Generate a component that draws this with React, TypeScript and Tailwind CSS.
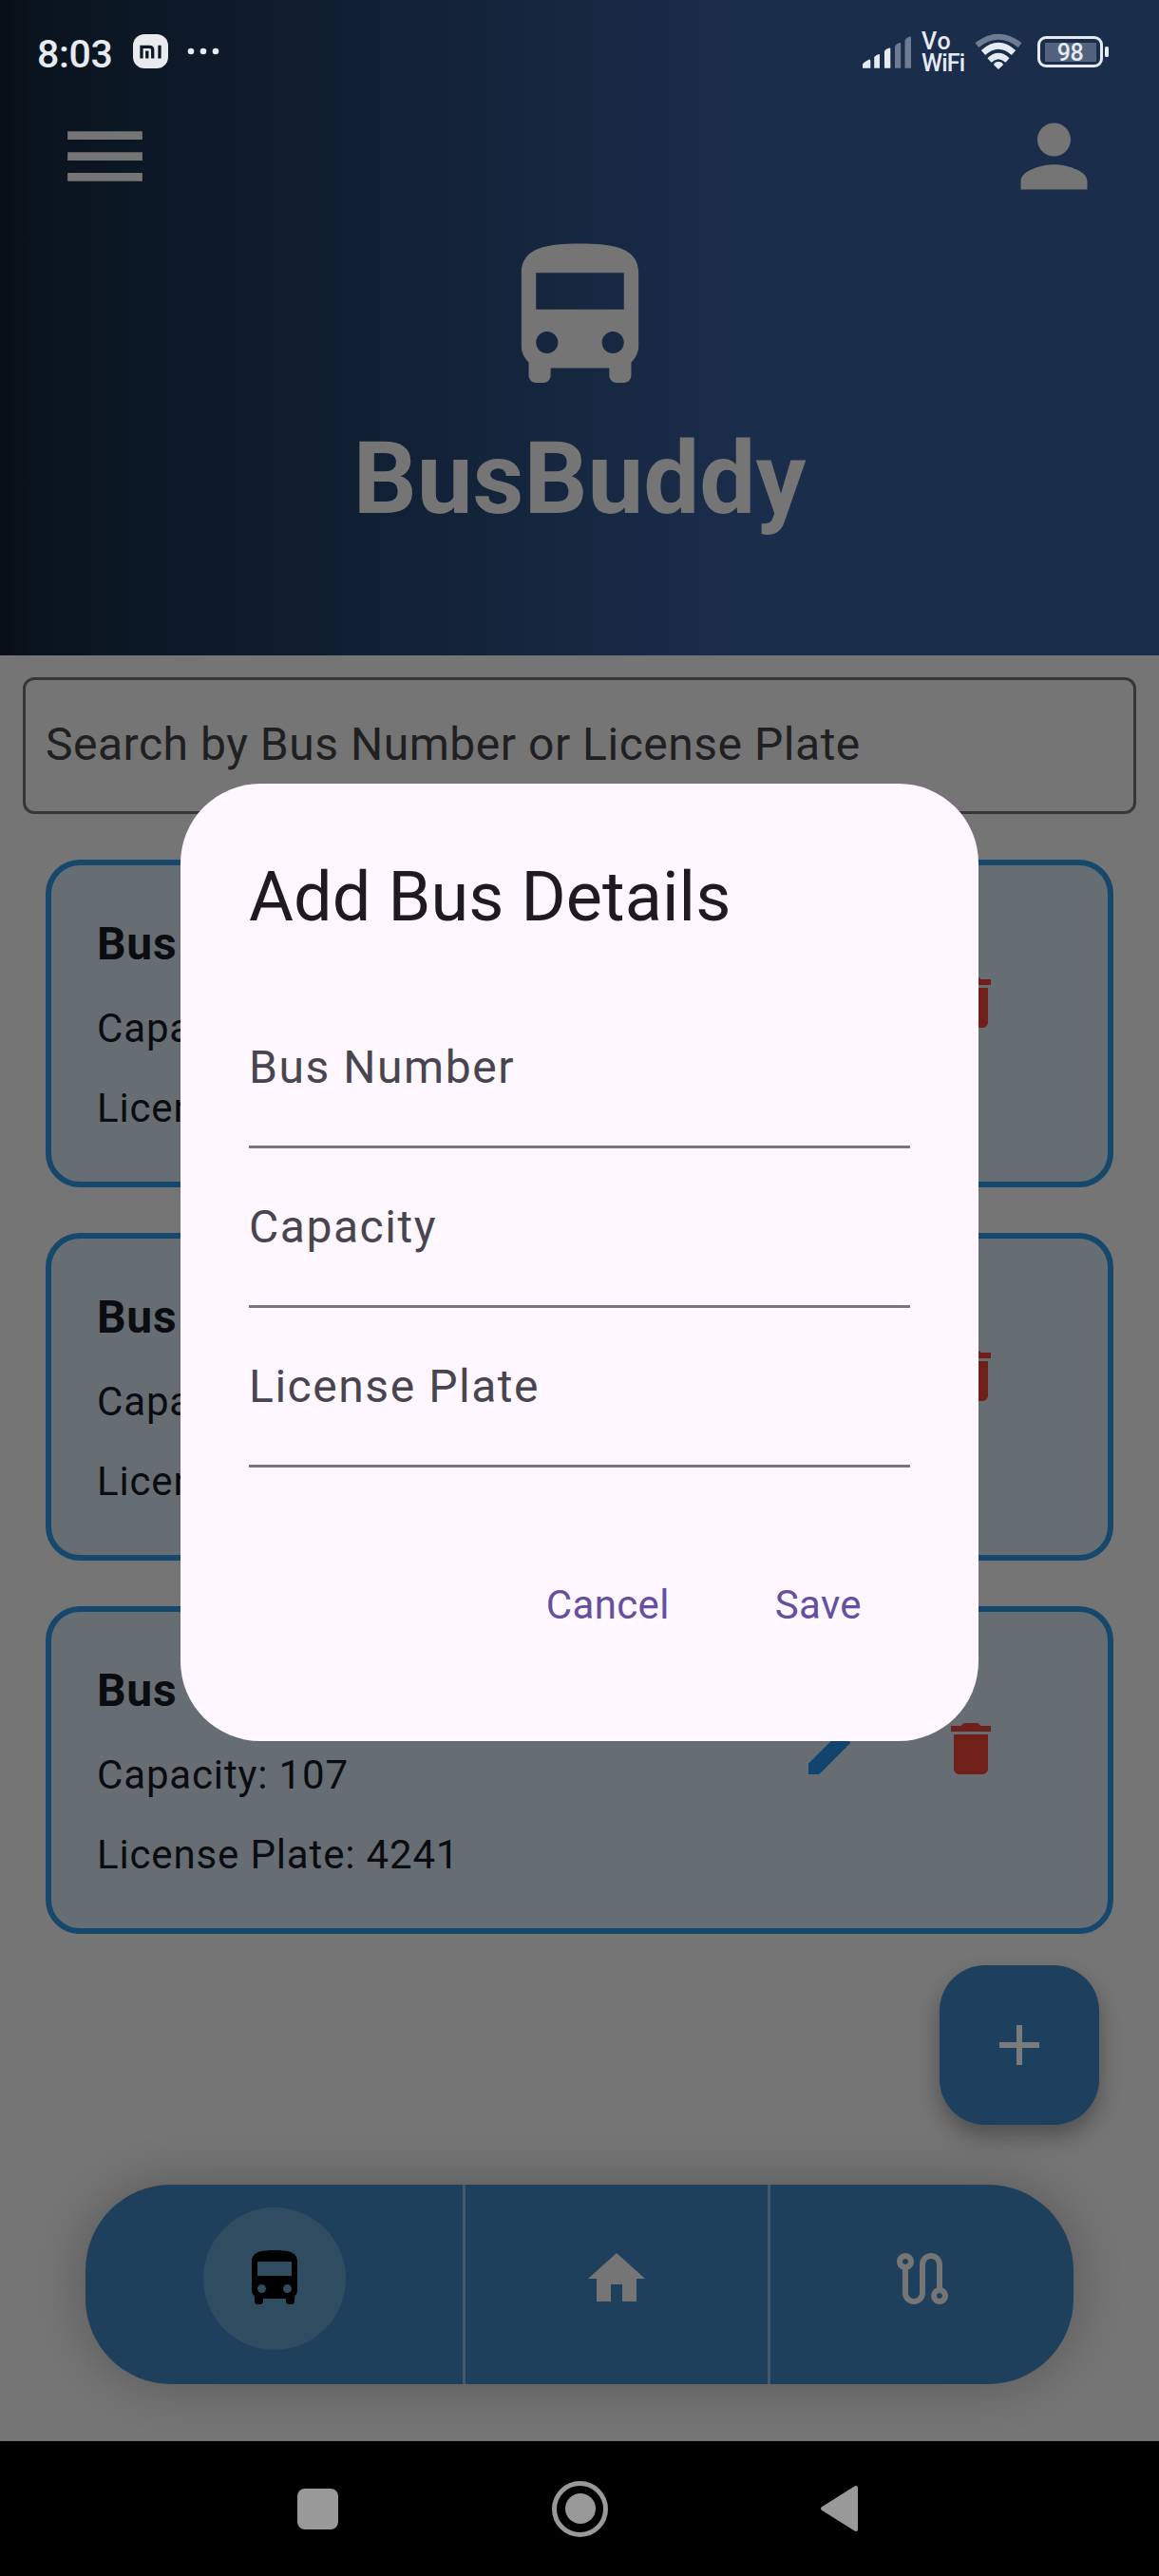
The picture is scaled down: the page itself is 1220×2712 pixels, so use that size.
import React from "react";

const MENU = "M3 18h18v-2H3v2zm0-5h18v-2H3v2zm0-7v2h18V6H3z";
const PERSON =
  "M12 12c2.21 0 4-1.79 4-4s-1.79-4-4-4-4 1.79-4 4 1.79 4 4 4zm0 2c-2.67 0-8 1.34-8 4v2h16v-2c0-2.66-5.33-4-8-4z";
const BUS =
  "M4 16c0 .88.39 1.67 1 2.22V20c0 .55.45 1 1 1h1c.55 0 1-.45 1-1v-1h8v1c0 .55.45 1 1 1h1c.55 0 1-.45 1-1v-1.78c.61-.55 1-1.34 1-2.22V6c0-3.5-3.58-4-8-4s-8 .5-8 4v10zm3.5 1c-.83 0-1.5-.67-1.5-1.5S6.67 14 7.5 14s1.5.67 1.5 1.5S8.33 17 7.5 17zm9 0c-.83 0-1.5-.67-1.5-1.5s.67-1.5 1.5-1.5 1.5.67 1.5 1.5-.67 1.5-1.5 1.5zm1.5-6H6V6h12v5z";
const EDIT =
  "M3 17.25V21h3.75L17.81 9.94l-3.75-3.75L3 17.25zM20.71 7.04c.39-.39.39-1.02 0-1.41l-2.34-2.34c-.39-.39-1.02-.39-1.41 0l-1.83 1.83 3.75 3.75 1.83-1.83z";
const TRASH = "M6 19c0 1.1.9 2 2 2h8c1.1 0 2-.9 2-2V7H6v12zM19 4h-3.5l-1-1h-5l-1 1H5v2h14V4z";
const PLUS = "M19 13h-6v6h-2v-6H5v-2h6V5h2v6h6v2z";
const HOME = "M10 20v-6h4v6h5v-8h3L12 3 2 12h3v8z";
const ROUTE =
  "M19 15.18V7c0-2.21-1.79-4-4-4s-4 1.79-4 4v10c0 1.1-.9 2-2 2s-2-.9-2-2V8.82C8.16 8.4 9 7.3 9 6c0-1.66-1.34-3-3-3S3 4.34 3 6c0 1.3.84 2.4 2 2.82V17c0 2.21 1.79 4 4 4s4-1.79 4-4V7c0-1.1.9-2 2-2s2 .9 2 2v8.18A2.996 2.996 0 0 0 18 21c1.66 0 3-1.34 3-3 0-1.3-.84-2.4-2-2.82zM6 7c-.55 0-1-.45-1-1s.45-1 1-1 1 .45 1 1-.45 1-1 1zm12 12c-.55 0-1-.45-1-1s.45-1 1-1 1 .45 1 1-.45 1-1 1z";

function Icon({ d, className }: { d: string; className: string }) {
  return (
    <svg viewBox="0 0 24 24" fill="currentColor" className={className}>
      <path d={d} />
    </svg>
  );
}

function StatusBar() {
  return (
    <div className="flex h-[112px] items-start justify-between pl-[39px] pr-[53px] text-[#e6eaf2]">
      <div className="flex pt-[33px]">
        <span className="w-[79px] text-[41px] leading-[48px] tracking-[-0.3px] font-medium">8:03</span>
        <svg width="37" height="36" viewBox="0 0 37 36" className="ml-[22px] mt-[3px]">
          <rect width="37" height="36" rx="12" fill="#e8eaee" />
          <path d="M9 25.500V13.300H17.500Q20.700 13.300 20.700 16.500V25.500M14.800 17.500V25.500M28 11.800V25.500" fill="none" stroke="#0d1826" strokeWidth="3.300" />
        </svg>
        <svg width="36" height="10" viewBox="0 0 36 10" className="ml-[19px] mt-[16px]" fill="currentColor">
          <circle cx="5" cy="5" r="3.300" />
          <circle cx="18" cy="5" r="3.300" />
          <circle cx="31" cy="5" r="3.300" />
        </svg>
      </div>
      <div className="flex pt-[32px]">
        <svg width="52" height="42" viewBox="0 0 52 42" fill="currentColor">
          <path d="M0 39.700V36Q0 34 7 30.500Q8.300 30.500 8.300 32V39.700ZM12.200 39.700V28Q15 25 18 25V39.700ZM23 39.700V22Q25 18.500 29.300 18.500V39.700Z" />
          <path d="M34 39.700V17Q36 13 40.200 13V39.700ZM44.500 39.700V11Q46.500 6.500 51 6.500V39.700Z" fill="#6f7b92" />
        </svg>
        <div className="ml-[10px] w-[48px] text-[25px] leading-[23px] font-medium">
          <div className="tracking-[1px]">Vo</div>
          <div className="tracking-[-0.8px]">WiFi</div>
        </div>
        <svg width="50" height="42" viewBox="0 0 50 42" className="ml-[8px]" fill="none" strokeWidth="6">
          <path d="M2.300 15.500Q25 -2 47.700 15.500" stroke="#6f7b92" />
          <path d="M9 23.500Q25 9 41 23.500" stroke="currentColor" strokeWidth="6.500" />
          <path d="M15.500 31.500Q25 22.500 34.500 31.500" stroke="currentColor" />
          <path d="M25 41L20.200 36.500Q20 33 25 33Q30 33 29.800 36.500Z" fill="currentColor" stroke="none" />
        </svg>
        <div className="ml-[16px] mt-[6px] flex h-[33px] w-[69px] items-center justify-center rounded-[9px] border-[3px] border-[#e6eaf2]">
          <div className="flex h-[20px] w-[54px] items-center justify-center bg-[#54637d] text-[25px] leading-[20px] tracking-[-0.5px] font-medium">
            <span className="pt-[3px]">98</span>
          </div>
        </div>
        <div className="ml-[2px] mt-[17px] h-[11px] w-[4px] rounded-[1.500px] bg-[#e6eaf2]" />
      </div>
    </div>
  );
}

function Header() {
  return (
    <header className="h-[690px] bg-[linear-gradient(90deg,#090e18_0%,#0a141f_3%,#1a2d4b_65%,#1a2d4b_100%)] text-[#757575]">
      <StatusBar />
      <div className="flex justify-between px-[58px]">
        <Icon d={MENU} className="size-[105px]" />
        <Icon d={PERSON} className="size-[105px]" />
      </div>
      <div className="mt-[24px] flex flex-col items-center">
        <Icon d={BUS} className="size-[185px]" />
        <h1 className="mt-[17px] text-[105px] leading-[123px] font-bold">BusBuddy</h1>
      </div>
    </header>
  );
}

function BusCard() {
  return (
    <div className="flex h-[345px] items-start justify-between rounded-[36px] border-[6px] border-[#16476d] bg-[#666e73] pl-12 pr-[72px] text-[#0a0c0f]">
      <div className="pt-[47px]">
        <div className="text-[48px] leading-[72px] tracking-[0.700px] font-bold">Bus 12</div>
        <div className="mt-[23px] text-[42px] leading-[60px] tracking-[0.850px]">Capacity: 107</div>
        <div className="mt-[24px] text-[42px] leading-[60px] tracking-[0.850px]">License Plate: 4241</div>
      </div>
      <div className="flex pt-[72px]">
        <button className="flex size-[144px] items-center justify-center">
          <Icon d={EDIT} className="size-[72px] text-[#11456f]" />
        </button>
        <button className="flex size-[144px] items-center justify-center">
          <Icon d={TRASH} className="size-[72px] text-[#701f19]" />
        </button>
      </div>
    </div>
  );
}

function BottomBar() {
  return (
    <nav className="mx-[90px] mt-[63px] flex h-[210px] rounded-[90px] bg-[#1e405d] text-[#757575] shadow-[0_0_50px_2px_rgba(0,0,0,0.240)]">
      <div className="flex w-[397px] items-center justify-center pb-3">
        <div className="flex size-[150px] items-center justify-center rounded-full bg-[#304c61] text-black">
          <Icon d={BUS} className="size-[72px]" />
        </div>
      </div>
      <div className="w-[3px] bg-[#44596b]" />
      <div className="flex w-[318px] items-center justify-center pb-3">
        <Icon d={HOME} className="size-[72px]" />
      </div>
      <div className="w-[3px] bg-[#44596b]" />
      <div className="flex flex-1 items-center justify-center pb-3">
        <Icon d={ROUTE} className="size-[72px]" />
      </div>
    </nav>
  );
}

function SystemNav() {
  return (
    <div className="flex h-[142px] items-center justify-between bg-black pl-[313px] pr-[315px]">
      <div className="size-[43px] rounded-[8px] bg-[#999]" />
      <div className="ml-[2px] flex size-[59px] items-center justify-center rounded-full border-[5px] border-[#999]">
        <div className="size-[32px] rounded-full bg-[#999]" />
      </div>
      <svg width="42" height="50" viewBox="0 0 42 50">
        <path d="M3 25L38 3V47Z" fill="#999" stroke="#999" strokeWidth="4" strokeLinejoin="round" />
      </svg>
    </div>
  );
}

function Dialog() {
  return (
    <div className="absolute left-[190px] top-[825px] h-[1008px] w-[840px] rounded-[84px] bg-[#fef7ff] px-[72px] pt-[72px]">
      <h2 className="text-[72px] leading-[96px] tracking-[0.100px] text-[#1d1b20]">Add Bus Details</h2>
      <div className="mt-[48px]">
        {["Bus Number", "Capacity", "License Plate"].map((label) => (
          <div
            key={label}
            className="flex h-[168px] items-center border-b-[3px] border-[#7b757f] text-[48px] leading-[72px] tracking-[1.550px] text-[#49454f]"
          >
            {label}
          </div>
        ))}
      </div>
      <div className="mt-[73px] flex h-[144px] items-center justify-end gap-[24px] text-[42px] leading-[60px] font-[450] tracking-[0.350px] text-[#6550a0]">
        <button className="px-[36px]">Cancel</button>
        <button className="px-[51px]">Save</button>
      </div>
    </div>
  );
}

export default function App() {
  return (
    <div className="relative h-[2712px] w-[1220px] overflow-hidden bg-[#757575] font-[Roboto,sans-serif]">
      <Header />
      <div className="mx-[24px] mt-[23px] flex h-[144px] items-center rounded-[12px] border-[3px] border-[#373737] px-[21px] pb-[3px] text-[48px] leading-[72px] tracking-[0.520px] text-[#202022]">
        Search by Bus Number or License Plate
      </div>
      <div className="mx-[48px] mt-[48px] flex flex-col gap-[48px]">
        <BusCard />
        <BusCard />
        <BusCard />
      </div>
      <div className="mr-[63px] mt-[33px] flex justify-end">
        <button className="flex size-[168px] items-center justify-center rounded-[48px] bg-[#1c405d] text-[#7a7b7c] shadow-[0_12px_24px_rgba(0,0,0,0.320)]">
          <Icon d={PLUS} className="size-[72px]" />
        </button>
      </div>
      <BottomBar />
      <div className="h-[60px]" />
      <SystemNav />
      <Dialog />
    </div>
  );
}
